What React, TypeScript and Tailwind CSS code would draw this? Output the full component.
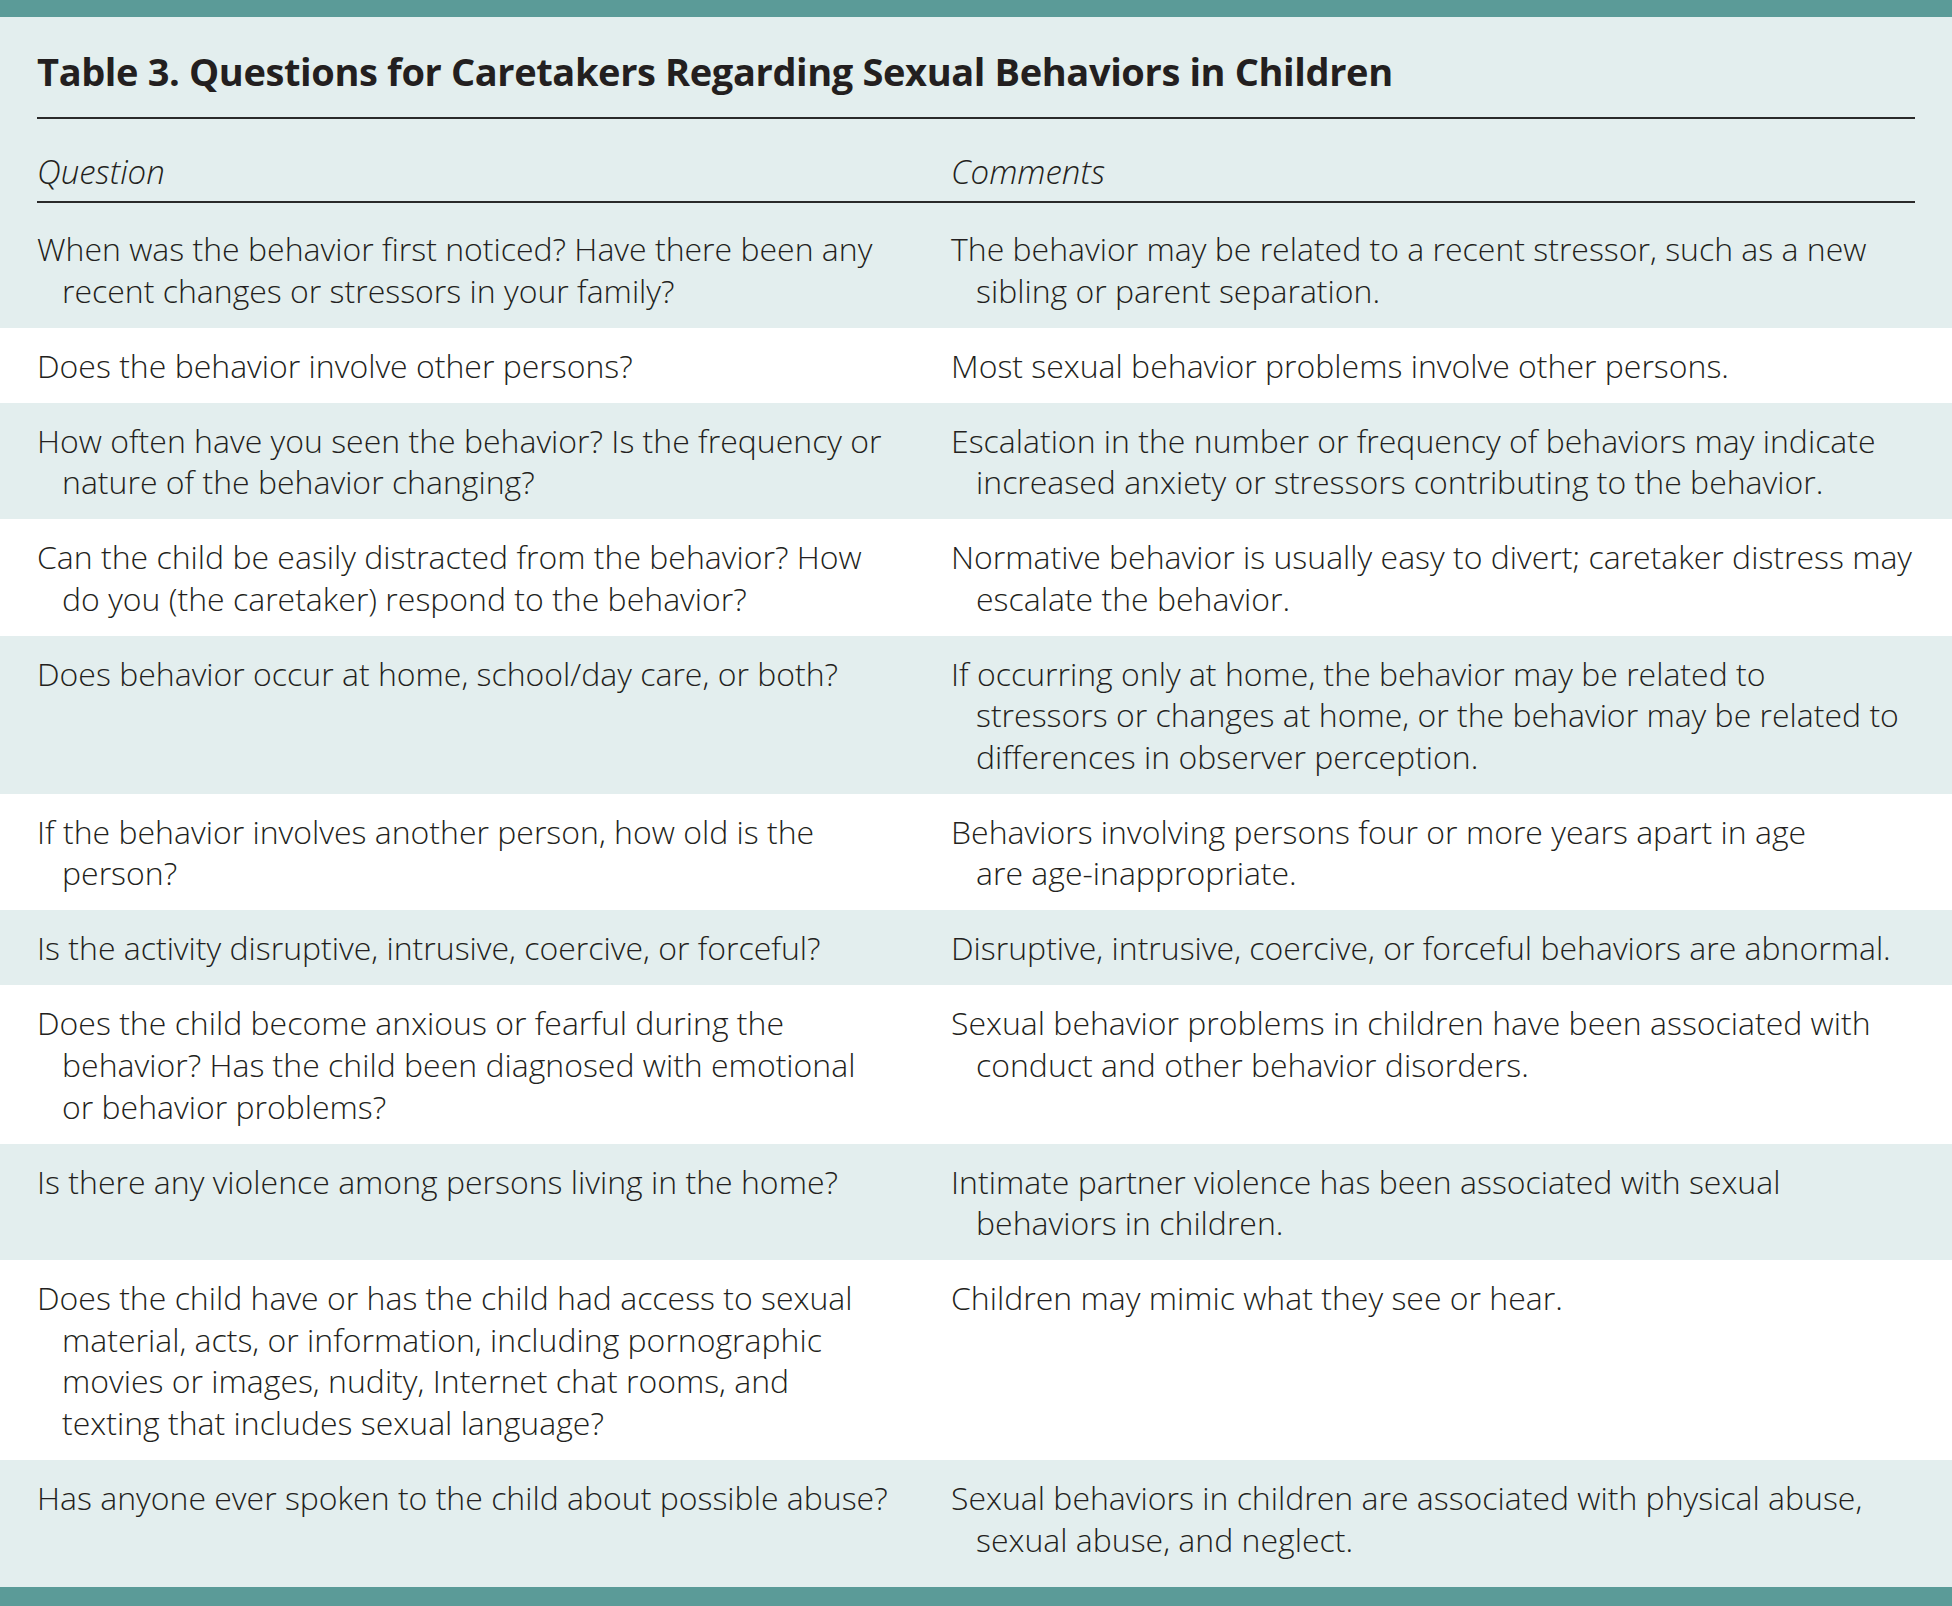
const rows: { q: string[]; c: string[] }[] = [
  {
    q: ['When was the behavior first noticed? Have there been any', 'recent changes or stressors in your family?'],
    c: ['The behavior may be related to a recent stressor, such as a new', 'sibling or parent separation.'],
  },
  {
    q: ['Does the behavior involve other persons?'],
    c: ['Most sexual behavior problems involve other persons.'],
  },
  {
    q: ['How often have you seen the behavior? Is the frequency or', 'nature of the behavior changing?'],
    c: ['Escalation in the number or frequency of behaviors may indicate', 'increased anxiety or stressors contributing to the behavior.'],
  },
  {
    q: ['Can the child be easily distracted from the behavior? How', 'do you (the caretaker) respond to the behavior?'],
    c: ['Normative behavior is usually easy to divert; caretaker distress may', 'escalate the behavior.'],
  },
  {
    q: ['Does behavior occur at home, school/day care, or both?'],
    c: [
      'If occurring only at home, the behavior may be related to',
      'stressors or changes at home, or the behavior may be related to',
      'differences in observer perception.',
    ],
  },
  {
    q: ['If the behavior involves another person, how old is the', 'person?'],
    c: ['Behaviors involving persons four or more years apart in age', 'are age-inappropriate.'],
  },
  {
    q: ['Is the activity disruptive, intrusive, coercive, or forceful?'],
    c: ['Disruptive, intrusive, coercive, or forceful behaviors are abnormal.'],
  },
  {
    q: [
      'Does the child become anxious or fearful during the',
      'behavior? Has the child been diagnosed with emotional',
      'or behavior problems?',
    ],
    c: ['Sexual behavior problems in children have been associated with', 'conduct and other behavior disorders.'],
  },
  {
    q: ['Is there any violence among persons living in the home?'],
    c: ['Intimate partner violence has been associated with sexual', 'behaviors in children.'],
  },
  {
    q: [
      'Does the child have or has the child had access to sexual',
      'material, acts, or information, including pornographic',
      'movies or images, nudity, Internet chat rooms, and',
      'texting that includes sexual language?',
    ],
    c: ['Children may mimic what they see or hear.'],
  },
  {
    q: ['Has anyone ever spoken to the child about possible abuse?'],
    c: ['Sexual behaviors in children are associated with physical abuse,', 'sexual abuse, and neglect.'],
  },
];

function Cell({ lines }: { lines: string[] }) {
  return (
    <div>
      {lines.map((line, i) => (
        <div key={i} className={i === 0 ? 'whitespace-nowrap' : 'whitespace-nowrap pl-[25px]'}>
          {line}
        </div>
      ))}
    </div>
  );
}

export default function App() {
  return (
    <div
      className="flex flex-col w-[1952px] h-[1606px] bg-[#e3eeee] text-[#231f20]"
      style={{ fontFamily: '"Open Sans", "Noto Sans", sans-serif' }}
    >
      {/* top band */}
      <div className="h-[17px] bg-[#5b9b98] shrink-0" />

      {/* title + header */}
      <div className="px-[37px] shrink-0">
        <h1 className="pt-[30px] pb-[22px] text-[38px] leading-[48px] font-bold border-b-2 border-[#2a2a2a] tracking-[-0.01em]">
          Table 3. Questions for Caretakers Regarding Sexual Behaviors in Children
        </h1>
        <div className="flex pt-[32px] pb-[8px] text-[33px] leading-[42px] font-light italic border-b-2 border-[#2a2a2a]">
          <div className="w-[914px]">Question</div>
          <div className="flex-1">Comments</div>
        </div>
      </div>

      {/* body rows */}
      <div className="flex flex-col flex-1 text-[32px] leading-[41.6px] font-light">
        {rows.map((row, i) => (
          <div
            key={i}
            className={
              'flex px-[37px] pb-[16.4px] ' +
              (i % 2 === 0 ? 'bg-[#e3eeee] ' : 'bg-white ') +
              (i === 0 ? 'pt-[25px] ' : 'pt-[17px] ') +
              (i === rows.length - 1 ? 'flex-1' : '')
            }
          >
            <div className="w-[914px]">
              <Cell lines={row.q} />
            </div>
            <div className="flex-1">
              <Cell lines={row.c} />
            </div>
          </div>
        ))}
      </div>

      {/* bottom band */}
      <div className="h-[19px] bg-[#5b9b98] shrink-0" />
    </div>
  );
}
